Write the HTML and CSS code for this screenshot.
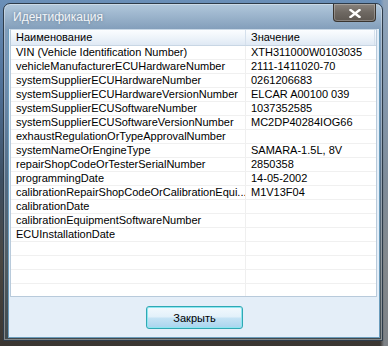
FILE: index.html
```html
<!DOCTYPE html>
<html>
<head>
<meta charset="utf-8">
<link rel="stylesheet" href="styles.css">
</head>
<body>
<div class="window">
  <div class="titlebar">
    <span class="title">Идентификация</span>
    <span class="close"><svg width="12" height="9" viewBox="0 0 12 9"><path d="M1.5 1 L10.5 8 M10.5 1 L1.5 8" stroke="#fff" stroke-width="2.4" stroke-linecap="square"/></svg></span>
  </div>
  <div class="client">
    <div class="list">
      <div class="header">
        <div class="hcell c1">Наименование</div>
        <div class="hcell c2">Значение</div>
        <div class="hcell c3"></div>
      </div>
      <div class="rows">
        <div class="row"><div class="cell c1">VIN (Vehicle Identification Number)</div><div class="cell c2">XTH311000W0103035</div></div>
        <div class="row"><div class="cell c1">vehicleManufacturerECUHardwareNumber</div><div class="cell c2">2111-1411020-70</div></div>
        <div class="row"><div class="cell c1">systemSupplierECUHardwareNumber</div><div class="cell c2">0261206683</div></div>
        <div class="row"><div class="cell c1">systemSupplierECUHardwareVersionNumber</div><div class="cell c2">ELCAR A00100 039</div></div>
        <div class="row"><div class="cell c1">systemSupplierECUSoftwareNumber</div><div class="cell c2">1037352585</div></div>
        <div class="row"><div class="cell c1">systemSupplierECUSoftwareVersionNumber</div><div class="cell c2">MC2DP40284IOG66</div></div>
        <div class="row"><div class="cell c1">exhaustRegulationOrTypeApprovalNumber</div><div class="cell c2"></div></div>
        <div class="row"><div class="cell c1">systemNameOrEngineType</div><div class="cell c2">SAMARA-1.5L, 8V</div></div>
        <div class="row"><div class="cell c1">repairShopCodeOrTesterSerialNumber</div><div class="cell c2">2850358</div></div>
        <div class="row"><div class="cell c1">programmingDate</div><div class="cell c2">14-05-2002</div></div>
        <div class="row"><div class="cell c1">calibrationRepairShopCodeOrCalibrationEqui...</div><div class="cell c2">M1V13F04</div></div>
        <div class="row"><div class="cell c1">calibrationDate</div><div class="cell c2"></div></div>
        <div class="row"><div class="cell c1">calibrationEquipmentSoftwareNumber</div><div class="cell c2"></div></div>
        <div class="row"><div class="cell c1">ECUInstallationDate</div><div class="cell c2"></div></div>
        <div class="row"><div class="cell c1"></div><div class="cell c2"></div></div>
        <div class="row"><div class="cell c1"></div><div class="cell c2"></div></div>
        <div class="row"><div class="cell c1"></div><div class="cell c2"></div></div>
        <div class="row last"><div class="cell c1"></div><div class="cell c2"></div></div>
      </div>
    </div>
    <div class="buttonbar">
      <button class="btn">Закрыть</button>
    </div>
  </div>
</div>
</body>
</html>
```

FILE: styles.css
```css
html, body {
  margin: 0;
  padding: 0;
}
body {
  width: 388px;
  height: 346px;
  overflow: hidden;
  background:
    linear-gradient(90deg, rgba(255,255,255,0) 0, rgba(255,255,255,0) 380px, rgba(170,180,190,0.6) 384px),
    linear-gradient(180deg, #6a8fb8 0, #4f6f95 90px, #3e4f62 180px, #4a4742 260px, #3a3632 346px);
  font-family: "Liberation Sans", Arial, sans-serif;
  font-size: 11px;
  color: #000;
}
.window {
  margin: 3px 0 0 3px;
  width: 380px;
  height: 338px;
  box-sizing: border-box;
  border: 1px solid #2e3c4a;
  border-radius: 7px 7px 0 0;
  background: linear-gradient(180deg, rgba(190,210,226,0.85) 0, rgba(140,165,190,0.75) 26px, rgba(110,140,170,0.55) 140px, rgba(70,90,100,0.5) 338px);
  display: flex;
  flex-direction: column;
  padding: 0 2px 2px 4px;
  box-shadow: inset 0 0 0 1px rgba(255,255,255,0.35);
}
.titlebar {
  height: 25px;
  display: flex;
  align-items: flex-start;
  flex: none;
}
.title {
  margin: 6px 0 0 5px;
  color: #f2f5f8;
  font-family: "Liberation Sans", Arial, sans-serif;
  font-size: 12px;
  text-shadow: 0 0 3px rgba(90,110,130,0.8);
}
.close {
  margin-left: auto;
  margin-right: 4px;
  width: 43px;
  height: 18px;
  box-sizing: border-box;
  border: 1px solid #3a3530;
  border-top: none;
  border-radius: 0 0 4px 4px;
  background: linear-gradient(180deg, #8a847e 0, #6e6862 50%, #5e5852 100%);
  display: flex;
  align-items: center;
  justify-content: center;
  box-shadow: inset 0 0 0 1px rgba(255,255,255,0.25);
}
.close svg {
  display: block;
  margin-top: 1px;
}
.client {
  flex: 1;
  display: flex;
  flex-direction: column;
  background: #e4eef8;
  border: 1px solid #6a9cbc;
  border-top: none;
}
.list {
  margin: 0 2px 0 1px;
  height: 268px;
  background: #fff;
  border: 1px solid #b8cadb;
  border-top: 1px solid #c9d8e6;
  box-sizing: border-box;
  overflow: hidden;
}
.header {
  display: flex;
  height: 16px;
  background: linear-gradient(180deg, #fbfdff 0, #eef4fa 50%, #dfe9f4 100%);
  border-bottom: 1px solid #c8d6e4;
  box-sizing: border-box;
}
.hcell {
  line-height: 15px;
  padding-left: 5px;
  box-sizing: border-box;
  border-right: 1px solid #d5e0ec;
  white-space: nowrap;
}
.c1 { width: 235px; flex: none; }
.c2 { width: 129px; flex: none; }
.c3 { flex: 1; border-right: none; }
.rows {
  display: flex;
  flex-direction: column;
}
.row {
  display: flex;
  height: 14px;
  border-bottom: 1px solid #f0f0f0;
  box-sizing: border-box;
}
.row.last { border-bottom: none; }
.cell {
  line-height: 13px;
  padding-left: 5px;
  box-sizing: border-box;
  white-space: nowrap;
  overflow: hidden;
}
.cell.c1 {
  border-right: 1px solid #efefef;
}
.buttonbar {
  flex: 1;
  display: flex;
  justify-content: center;
  align-items: flex-start;
  padding-top: 9px;
}
.btn {
  width: 97px;
  height: 23px;
  margin-left: 1px;
  border: 1px solid #2fa8b4;
  border-radius: 3px;
  background: linear-gradient(180deg, #f2f9fd 0, #e3f1fa 45%, #c4e2f4 55%, #a9d4ee 100%);
  box-shadow: inset 0 0 0 1px #8ee6f0;
  font-family: "Liberation Sans", Arial, sans-serif;
  font-size: 11px;
  color: #000;
  padding: 0;
}
```
